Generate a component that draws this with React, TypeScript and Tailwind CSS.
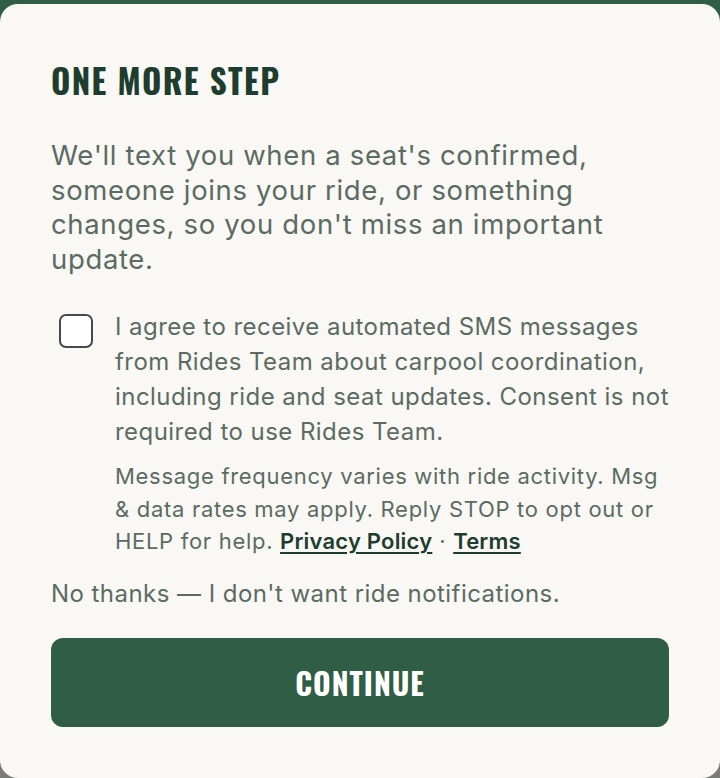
import React from "react";

const condensed = {
  fontFamily:
    '"Oswald", "DejaVu Sans Condensed", "Liberation Sans Narrow", "Roboto Condensed", sans-serif',
};

export default function App() {
  return (
    <div className="min-h-[778px] bg-[linear-gradient(#2f5d46_0_24px,#7b7b79_24px)] pt-[4px]">
      <div
        className="flex min-h-[774px] flex-col rounded-[18px] bg-[#f9f8f4] px-[51px] pt-[57px] text-[#5c6b62]"
        style={{ fontFamily: 'Inter, "Noto Sans", sans-serif' }}
      >
        <h2
          className="text-[33px] font-bold leading-[40px] tracking-[1.35px] text-[#1f3d2e]"
          style={condensed}
        >
          ONE MORE STEP
        </h2>

        <p className="mt-[37px] text-[27.5px] leading-[34.5px] tracking-[0.65px]">
          We'll text you when a seat's confirmed, someone joins your ride, or something changes, so
          you don't miss an important update.
        </p>

        {/* Consent */}
        <label className="mt-[33px] flex gap-[22px]">
          <span className="mt-[5px] ml-[8px] h-[34px] w-[34px] shrink-0 rounded-[7px] border-2 border-[#474a48] bg-white" />
          <div className="-mr-[6px] flex-1">
            <p className="text-[24px] leading-[35px] tracking-[0.45px]">
              I agree to receive automated SMS messages from Rides Team about carpool coordination,
              including ride and seat updates. Consent is not required to use Rides Team.
            </p>
            <p className="mt-[11px] text-[22px] leading-[32.5px] tracking-[0.7px]">
              Message frequency varies with ride activity. Msg &amp; data rates may apply. Reply STOP
              to opt out or HELP for help.{" "}
              <a className="font-semibold tracking-[0.2px] text-[#1f3d2e] underline decoration-2 underline-offset-[3px]">
                Privacy Policy
              </a>{" "}
              ·{" "}
              <a className="font-semibold tracking-[0.2px] text-[#1f3d2e] underline decoration-2 underline-offset-[3px]">
                Terms
              </a>
            </p>
          </div>
        </label>

        <p className="mt-[18px] text-[24px] leading-[35px] tracking-[0.45px]">
          No thanks — I don't want ride notifications.
        </p>

        <button
          className="mt-[27px] h-[89px] w-full rounded-[12px] bg-[#2f5d46] text-[30px] font-bold tracking-[1px] text-white"
          style={condensed}
        >
          CONTINUE
        </button>
      </div>
    </div>
  );
}
